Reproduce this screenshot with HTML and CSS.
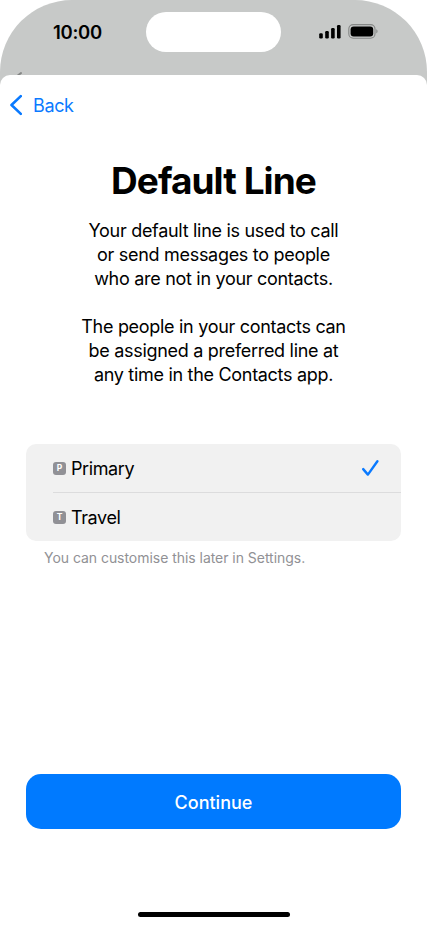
FILE: index.html
```html
<!DOCTYPE html>
<html lang="en">
<head>
    <meta charset="UTF-8">
    <meta name="viewport" content="width=device-width, initial-scale=1.0">
    <title>Default Line</title>
    <link rel="stylesheet" href="styles.css">
</head>
<body>
    <div class="phone">
        <header class="status-bar">
            <div class="time">10:00</div>
            <div class="island"></div>
            <div class="status-icons">
                <svg class="signal" width="22" height="14" viewBox="0 0 22 14">
                    <rect x="0.2" y="8.2" width="3.6" height="5.3" rx="1.2"/>
                    <rect x="6.2" y="6" width="3.6" height="7.5" rx="1.2"/>
                    <rect x="12.1" y="3" width="3.6" height="10.5" rx="1.2"/>
                    <rect x="18" y="0" width="3.6" height="13.5" rx="1.2"/>
                </svg>
                <svg class="battery" width="30" height="15" viewBox="0 0 30 15">
                    <rect x="0.8" y="0.6" width="26.2" height="13.6" rx="4.4" fill="none" stroke="#858786" stroke-width="1.1"/>
                    <rect x="2.6" y="2.6" width="22.6" height="9.8" rx="3"/>
                    <path d="M28.3 5.3c1.7.7 1.7 3.4 0 4.1z" fill="#858786"/>
                </svg>
            </div>
            <svg class="behind" width="7" height="4" viewBox="0 0 7 4">
                <path d="M1 5.2L5 2" fill="none" stroke="#858786" stroke-width="2" stroke-linecap="round"/>
            </svg>
        </header>

        <main class="sheet">
            <nav class="nav">
                <a class="back">
                    <svg width="14" height="22" viewBox="0 0 14 22">
                        <path d="M12.8 2.1L3.5 11l9.3 8.9" fill="none" stroke="#0a7aff" stroke-width="2.6" stroke-linecap="round" stroke-linejoin="round"/>
                    </svg>
                    <span>Back</span>
                </a>
            </nav>

            <h1>Default Line</h1>
            <p class="intro">Your default line is used to call<br>or send messages to people<br>who are not in your contacts.</p>
            <p class="intro">The people in your contacts can<br>be assigned a preferred line at<br>any time in the Contacts app.</p>

            <ul class="lines">
                <li class="line">
                    <span class="badge">P</span>
                    <span class="name">Primary</span>
                    <svg class="check" width="18" height="18" viewBox="0 0 18 18">
                        <path d="M2.2 10.1l4.7 5.5L16.4 2.2" fill="none" stroke="#0a7aff" stroke-width="2.4" stroke-linecap="round" stroke-linejoin="round"/>
                    </svg>
                </li>
                <li class="line">
                    <span class="badge">T</span>
                    <span class="name">Travel</span>
                </li>
            </ul>
            <p class="note">You can customise this later in Settings.</p>

            <button class="continue" type="button">Continue</button>
            <div class="home-indicator"></div>
        </main>
    </div>
</body>
</html>
```
FILE: styles.css
```css
* {
    box-sizing: border-box;
}
body {
    font-family: 'Inter', sans-serif;
    margin: 0;
    background-color: #fff;
    color: #000;
}
.phone {
    width: 427px;
    height: 926px;
    background-color: #c7c9c8;
    border-radius: 72px 72px 0 0;
    overflow: hidden;
}
.status-bar {
    position: relative;
    display: grid;
    grid-template-columns: 146px 135px 146px;
    height: 75px;
    padding-top: 12px;
    align-items: start;
}
.time {
    padding-left: 53px;
    font-size: 18.5px;
    line-height: 40px;
    font-weight: 600;
    letter-spacing: -0.3px;
}
.island {
    height: 40px;
    border-radius: 20px;
    background-color: #fff;
}
.status-icons {
    display: flex;
    gap: 7px;
    padding: 12px 0 0 38px;
}
.signal {
    margin-top: 1px;
}
/* Arrow of the screen below, cut off by the sheet */
.behind {
    position: absolute;
    left: 16px;
    bottom: 0;
}
.sheet {
    display: flex;
    flex-direction: column;
    height: 851px;
    padding: 0 26px;
    background-color: #fff;
    border-radius: 10px 10px 0 0;
}
.nav {
    height: 61px;
    margin: 0 -18px;
}
.back {
    display: flex;
    align-items: center;
    gap: 11px;
    height: 60px;
    color: #0a7aff;
    font-size: 18px;
    letter-spacing: -0.35px;
}
h1 {
    margin: 20px 0 1px;
    font-size: 37px;
    line-height: 50px;
    font-weight: 700;
    letter-spacing: -0.95px;
    text-align: center;
}
.intro {
    margin: 12px 0;
    font-size: 18px;
    line-height: 24px;
    letter-spacing: -0.3px;
    text-align: center;
}
.lines {
    list-style: none;
    margin: 45px 0 0;
    padding: 0 0 0 27px;
    height: 97px;
    background-color: #f1f1f1;
    border-radius: 10px;
}
.line {
    display: flex;
    align-items: center;
    height: 48px;
}
.line + .line {
    height: 49px;
    border-top: 1px solid #dcdcdd;
}
.badge {
    width: 13px;
    height: 13px;
    margin-right: 5px;
    border-radius: 3px;
    background-color: #919196;
    color: #fff;
    font-size: 8.5px;
    line-height: 13px;
    font-weight: 700;
    text-align: center;
}
.name {
    padding-top: 1px;
    font-size: 18px;
    letter-spacing: -0.4px;
}
.check {
    margin: 0 22px 0 auto;
}
.note {
    margin: 7px 18px 0;
    font-size: 14px;
    line-height: 20px;
    letter-spacing: -0.04px;
    color: #919195;
}
.continue {
    height: 55px;
    margin-top: auto;
    padding-top: 3px;
    border: none;
    border-radius: 15px;
    background-color: #007aff;
    color: #fff;
    font-family: inherit;
    font-size: 18px;
    font-weight: 500;
    letter-spacing: 0;
}
.home-indicator {
    width: 152px;
    height: 5px;
    margin: 83px auto 9px;
    border-radius: 3px;
    background-color: #000;
}
```
